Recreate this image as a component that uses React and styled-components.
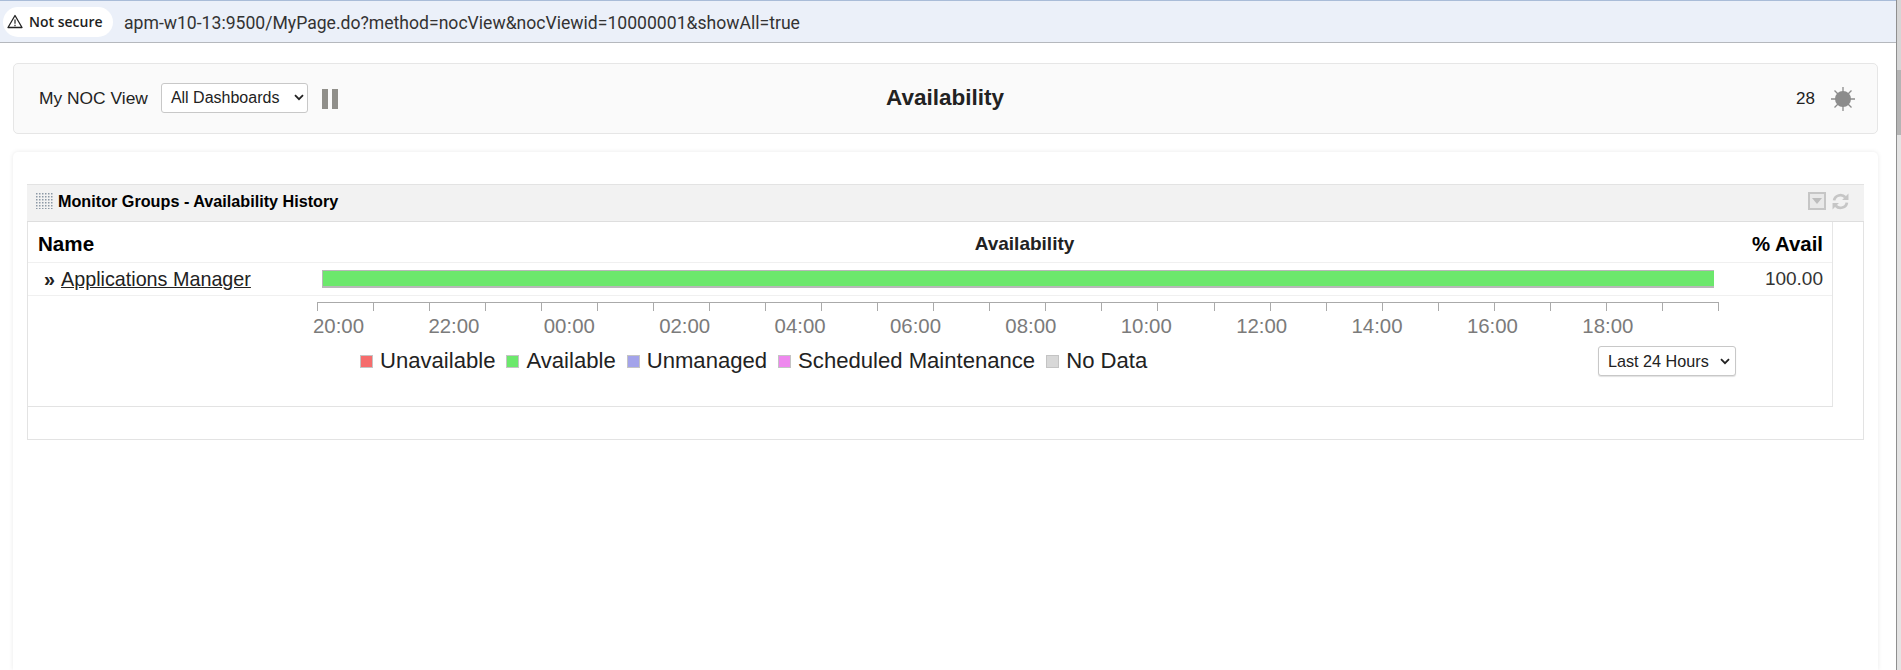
import React from "react";
import styled, { createGlobalStyle } from "styled-components";

const Global = createGlobalStyle`
  html, body { margin: 0; padding: 0; height: 100%; overflow: hidden; background: #fff; }
  body { font-family: "Liberation Sans", Arial, sans-serif; color: #222; }
  #root { height: 100%; }
`;

const Window = styled.div`
  width: 1901px; height: 670px; display: flex; overflow: hidden; background: #fff;
`;
const Main = styled.div`
  width: 1896px; display: flex; flex-direction: column; flex: none;
`;
const Scrollbar = styled.div`
  width: 5px; flex: none; box-sizing: border-box; background: #e4e4e4; border-left: 1px solid #8f8f8f;
  display: flex; flex-direction: column;
`;
const ScrollTop = styled.div`height: 70px; background: #d6d6d6;`;
const ScrollThumb = styled.div`height: 65px; background: #b4b4b4;`;

const AddressBar = styled.div`
  height: 41px; flex: none; background: #ebf0f9;
  border-top: 1px solid #a9bcd8; border-bottom: 1px solid #b5b8bd;
  display: flex; align-items: center; padding-left: 3px; gap: 11px;
`;
const SecurityChip = styled.div`
  width: 110px; height: 30px; box-sizing: border-box; background: #fff; border-radius: 15px;
  display: flex; align-items: center; gap: 6px; padding-left: 4px;
  font: 600 14px "Open Sans", sans-serif; color: #1f1f1f; white-space: nowrap;
`;
const Url = styled.div`font: 400 17.6px Roboto, sans-serif; color: #333; white-space: nowrap; padding-top: 2px;`;

const Content = styled.div`
  padding: 20px 18px 0 13px; display: flex; flex-direction: column; gap: 18px; flex: 1; min-height: 0;
`;
const TopPanel = styled.div`
  height: 71px; box-sizing: border-box; background: #fafafa; border: 1px solid #e6e6e6; border-radius: 5px;
  display: grid; grid-template-columns: 1fr auto 1fr; align-items: center; padding: 0 21px 0 25px;
`;
const TopLeft = styled.div`display: flex; align-items: center;`;
const ViewLabel = styled.span`font-size: 17.4px; color: #222; margin-right: 13px;`;
const NativeSelect = styled.div`
  box-sizing: border-box; background: #fff; border: 1px solid #c8c8c8; border-radius: 3px;
  display: flex; align-items: center; justify-content: space-between; white-space: nowrap; color: #222;
  width: ${p => p.$w}px; height: ${p => p.$h}px; font-size: ${p => p.$fs}px; padding: 0 ${p => p.$pr}px 0 ${p => p.$pl}px;
  box-shadow: ${p => p.$shadow ? "0 1px 1px rgba(0,0,0,.12)" : "none"};
`;
const DashSelect = styled.div`margin-top: -2px;`;
const PauseWrap = styled.div`display: flex; gap: 4px; margin-left: 14px;`;
const PauseBar = styled.div`width: 6px; height: 20px; background: #908f8a;`;
const PageTitle = styled.h1`margin: 0 5px 2px 0; font-size: 22.5px; font-weight: 700; color: #222;`;
const TopRight = styled.div`display: flex; justify-content: flex-end; align-items: center; gap: 15px;`;
const Count = styled.span`font-size: 17px; color: #222;`;

const Card = styled.div`
  flex: 1; min-height: 0; background: #fff; border-radius: 5px 5px 0 0; padding: 32px 14px 0 14px;
  box-shadow: 0 0 5px rgba(0,0,0,.09);
`;
const Widget = styled.section`
  height: 256px; box-sizing: border-box; border: 1px solid #e3e3e3; border-top: none;
`;
const WidgetHeader = styled.header`
  height: 38px; box-sizing: border-box; background: #f2f2f2; border-top: 1px solid #e3e3e3; border-bottom: 1px solid #dedede;
  margin: 0 -1px; padding: 0 15px 4px 9px; display: flex; align-items: center;
`;
const WidgetTitle = styled.h2`margin: 0 0 0 4px; font-size: 16.2px; font-weight: 700; color: #000; flex: 1; white-space: nowrap;`;
const HeaderIcons = styled.div`display: flex; align-items: center; gap: 6px;`;

const Inner = styled.div`
  width: 1805px; height: 185px; box-sizing: border-box; border-right: 1px solid #e6e6e6; border-bottom: 1px solid #e3e3e3;
  display: flex; flex-direction: column;
`;
const HeadRow = styled.div`
  height: 41px; flex: none; box-sizing: border-box; border-bottom: 1px solid #f0f0f0;
  display: grid; grid-template-columns: 294px 1fr 120px; align-items: center; padding: 4px 9px 0 10px;
`;
const NameHead = styled.div`font-size: 20.6px; font-weight: 700; color: #000;`;
const AvailHead = styled.div`font-size: 19px; font-weight: 700; color: #222; text-align: center; padding-left: 14px;`;
const PctHead = styled.div`font-size: 20.4px; font-weight: 700; color: #000; text-align: right;`;
const DataRow = styled.div`
  height: 33px; flex: none; box-sizing: border-box; border-bottom: 1px solid #f0f0f0;
  display: flex; align-items: center; padding-right: 9px;
`;
const NameCell = styled.div`width: 294px; flex: none; padding-left: 16px; box-sizing: border-box; font-size: 19.75px; white-space: nowrap; display: flex; gap: 6px;`;
const Chevrons = styled.b`color: #222;`;
const GroupLink = styled.a`color: #222; text-decoration: underline;`;
const Bar = styled.div`
  width: 1392px; height: 18px; box-sizing: border-box; flex: none; background: #6ce86c;
  border: 1px solid #b8b8b8; border-width: 1px 0 2px 1px;
`;
const PctCell = styled.div`flex: 1; text-align: right; font-size: 19px; color: #333;`;

const AxisLine = styled.div`
  margin: 6px 0 0 289px; width: 1402px; height: 9px; box-sizing: border-box; flex: none;
  border-top: 1px solid #aaa; display: flex; justify-content: space-between;
`;
const Tick = styled.i`display: block; width: 1px; height: 8px; background: #aaa;`;
const AxisLabels = styled.div`
  margin: 0 0 0 285px; display: flex; font-size: 20.4px; color: #7b7b7b; line-height: 30px; flex: none;
`;
const AxisLabel = styled.span`width: 115.4px; flex: none;`;
const LegendRow = styled.div`
  margin-top: 5px; display: flex; align-items: center; height: 30px; flex: none; padding-left: 332px;
`;
const LegendItem = styled.div`
  display: flex; align-items: center; gap: 7px; font-size: 22.1px; color: #222; margin-right: 11px; white-space: nowrap;
`;
const Swatch = styled.i`
  display: block; width: 13px; height: 13px; box-sizing: border-box; background: ${p => p.$c};
  border: 1px solid #c4c4c4;
`;
const RangeSelect = styled.div`margin-left: auto; margin-right: 96px;`;

const Chevron = () => (
  <svg width="10" height="7" viewBox="0 0 10 7"><path d="M1 1.2 5 5.2 9 1.2" fill="none" stroke="#222" strokeWidth="1.8" /></svg>
);
const Warn = () => (
  <svg width="16" height="15" viewBox="0 0 16 15">
    <path d="M8 1.5 15 13.5H1Z" fill="none" stroke="#222" strokeWidth="1.3" strokeLinejoin="round" />
    <path d="M8 5.5v4.2M8 10.8v1.4" stroke="#222" strokeWidth="1.2" />
  </svg>
);
const Sun = () => (
  <svg width="26" height="26" viewBox="0 0 26 26">
    <g stroke="#8c8c8c" strokeWidth="1.3">
      <path d="M13 1v24M1 13h24M4.5 4.5l17 17M21.5 4.5l-17 17" />
    </g>
    <circle cx="13" cy="13" r="8" fill="#8c8c8c" />
  </svg>
);
const Grip = () => (
  <svg width="18" height="16" viewBox="0 0 18 16">
    <pattern id="g" width="3" height="3" patternUnits="userSpaceOnUse"><rect width="1.5" height="1.5" fill="#8d99a6" /></pattern>
    <rect width="18" height="16" fill="url(#g)" />
  </svg>
);
const DropBox = () => (
  <svg width="18" height="18" viewBox="0 0 18 18">
    <rect x="1" y="1" width="16" height="16" fill="#e9e9e9" stroke="#c6c6c6" strokeWidth="2" />
    <path d="M4 6h10l-5 6z" fill="#bdbdbd" />
  </svg>
);
const Refresh = () => (
  <svg width="17" height="17" viewBox="0 0 16 16" fill="none" stroke="#c6c6c6" strokeWidth="2.6">
    <path d="M2 7a6 5.5 0 0 1 10.5-3" />
    <path d="M14 9a6 5.5 0 0 1-10.5 3" />
    <path d="M15.5 .5v6h-6zM.5 15.5v-6h6z" fill="#c6c6c6" stroke="none" />
  </svg>
);

const hours = ["20:00","22:00","00:00","02:00","04:00","06:00","08:00","10:00","12:00","14:00","16:00","18:00"];
const legend = [["Unavailable","#f56c6c"],["Available","#6ce86c"],["Unmanaged","#a3a3ea"],["Scheduled Maintenance","#ee88ee"],["No Data","#d8d8d8"]];

export default function App() {
  return (
    <Window>
      <Global />
      <Main>
        <AddressBar>
          <SecurityChip><Warn />Not secure</SecurityChip>
          <Url>apm-w10-13:9500/MyPage.do?method=nocView&amp;nocViewid=10000001&amp;showAll=true</Url>
        </AddressBar>
        <Content>
          <TopPanel>
            <TopLeft>
              <ViewLabel>My NOC View</ViewLabel>
              <DashSelect><NativeSelect $w={147} $h={30} $fs={16} $pl={9} $pr={3}>All Dashboards <Chevron /></NativeSelect></DashSelect>
              <PauseWrap><PauseBar /><PauseBar /></PauseWrap>
            </TopLeft>
            <PageTitle>Availability</PageTitle>
            <TopRight><Count>28</Count><Sun /></TopRight>
          </TopPanel>
          <Card>
            <Widget>
              <WidgetHeader>
                <Grip />
                <WidgetTitle>Monitor Groups - Availability History</WidgetTitle>
                <HeaderIcons><DropBox /><Refresh /></HeaderIcons>
              </WidgetHeader>
              <Inner>
                <HeadRow>
                  <NameHead>Name</NameHead>
                  <AvailHead>Availability</AvailHead>
                  <PctHead>% Avail</PctHead>
                </HeadRow>
                <DataRow>
                  <NameCell><Chevrons>»</Chevrons><GroupLink>Applications Manager</GroupLink></NameCell>
                  <Bar />
                  <PctCell>100.00</PctCell>
                </DataRow>
                <AxisLine>{Array.from({ length: 26 }, (_, i) => <Tick key={i} />)}</AxisLine>
                <AxisLabels>{hours.map(h => <AxisLabel key={h}>{h}</AxisLabel>)}</AxisLabels>
                <LegendRow>
                  {legend.map(([t, c]) => <LegendItem key={t}><Swatch $c={c} />{t}</LegendItem>)}
                  <RangeSelect><NativeSelect $w={138} $h={30} $fs={16.2} $pl={9} $pr={5} $shadow>Last 24 Hours <Chevron /></NativeSelect></RangeSelect>
                </LegendRow>
              </Inner>
            </Widget>
          </Card>
        </Content>
      </Main>
      <Scrollbar><ScrollTop /><ScrollThumb /></Scrollbar>
    </Window>
  );
}
